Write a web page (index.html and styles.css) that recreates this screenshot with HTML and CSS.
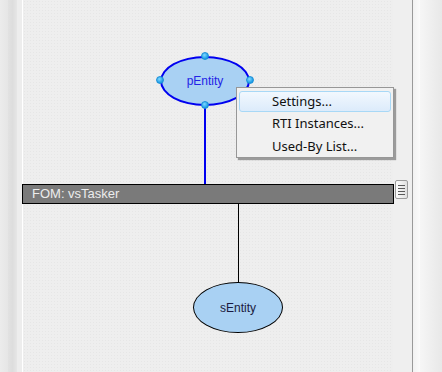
FILE: index.html
```html
<!DOCTYPE html>
<html>
<head>
<meta charset="utf-8">
<link rel="stylesheet" href="styles.css">
</head>
<body>
<div class="frame">
  <div class="left-panel"><div class="lp-a"></div><div class="lp-b"></div><div class="lp-c"></div></div>
  <div class="canvas">
    <div class="link link-blue"></div>
    <div class="link link-black"></div>
    <div class="node node-p">pEntity</div>
    <span class="handle h-top"></span>
    <span class="handle h-left"></span>
    <span class="handle h-right"></span>
    <span class="handle h-bottom"></span>
    <div class="fom-bar">FOM: vsTasker</div>
    <div class="node node-s">sEntity</div>
    <div class="menu">
      <div class="menu-item active">Settings...</div>
      <div class="menu-item">RTI Instances...</div>
      <div class="menu-item">Used-By List...</div>
    </div>
  </div>
  <div class="right-panel">
    <div class="rp-a"><div class="grip"><i></i><i></i><i></i><i></i></div></div>
    <div class="rp-line"></div>
    <div class="rp-b"></div>
    <div class="rp-c"></div>
  </div>
</div>
</body>
</html>
```
FILE: styles.css
```css
* { box-sizing: border-box; }
html, body { margin: 0; padding: 0; }
body { width: 442px; height: 372px; overflow: hidden; background: #ededed; font-family: "Liberation Sans", Arial, sans-serif; }
.frame { display: flex; width: 442px; height: 372px; }
.left-panel { display: flex; width: 22px; flex: none; }
.lp-a { width: 8px; background: linear-gradient(to right, #ececec, #e6e6e6); }
.lp-b { width: 9px; background: linear-gradient(to right, #e2e2e2, #dddddd 50%, #e6e6e6); }
.lp-c { width: 5px; background: #ededed; }
.canvas { position: relative; z-index: 1; width: 371px; flex: none; background-color: #eeeeee; border-left: 1px solid #ffffff;
  background-image: radial-gradient(circle, #e6e6e6 0.6px, transparent 0.9px); background-size: 3px 3px; }
.right-panel { display: flex; flex: 1; }
.rp-a { position: relative; width: 19px; background: #efefef; }
.rp-line { width: 1px; background: #9a9a9a; }
.rp-b { width: 7px; background: linear-gradient(to right, #f2f2f2, #fbfbfb); }
.rp-c { flex: 1; background: linear-gradient(to right, #f6f6f6, #ececec 70%, #e8e8e8); }
.grip { position: absolute; left: 2px; top: 180px; width: 13px; height: 19px; border: 1px solid #9c9c9c; border-radius: 2px;
  background: linear-gradient(to right, #fdfdfd, #e0e0e0); display: flex; flex-direction: column; justify-content: center; gap: 2px; padding: 0 2px; }
.grip i { display: block; height: 1px; background: #5a5a5a; }

.node { position: absolute; border-radius: 50%; background: #a9d1f3; display: flex; align-items: center; justify-content: center; font-size: 12px; }
.node-p { left: 137px; top: 56px; width: 90px; height: 50px; border: 2px solid #0000f0; color: #2323e6; }
.node-s { left: 170px; top: 282px; width: 90px; height: 51px; border: 1px solid #000; color: #1a1a40; }
.handle { position: absolute; width: 8px; height: 8px; border-radius: 50%; background: radial-gradient(circle at 40% 35%, #7fd8ff, #1b9be6 70%); border: 1px solid #1a8fd8; }
.h-top { left: 178px; top: 52px; }
.h-left { left: 133px; top: 76px; }
.h-right { left: 223px; top: 76px; }
.h-bottom { left: 178px; top: 101px; }
.link { position: absolute; }
.link-blue { left: 181px; top: 105px; width: 2px; height: 80px; background: #0000f0; }
.link-black { left: 215px; top: 203px; width: 1px; height: 80px; background: #000; }
.fom-bar { position: absolute; left: -1px; top: 184px; width: 372px; height: 20px; border: 1px solid #000; background: #7a7a7a;
  color: #ececec; font-size: 13px; line-height: 18px; padding-left: 9px; }
.menu { position: absolute; left: 213px; top: 87px; width: 158px; height: 71px; background: #f1f1f1; border: 1px solid #979797;
  padding: 3px 2px; box-shadow: 2px 2px 1px rgba(0,0,0,0.35); font-family: "Noto Sans", "Open Sans", sans-serif; font-size: 13px; color: #101010; }
.menu-item { height: 23px; line-height: 21px; padding-left: 32px; border: 1px solid transparent; border-radius: 3px; }
.menu-item.active { border-color: #a8d8f6; background: linear-gradient(to bottom, #f2f8fe, #dcebfb); height: 21px; line-height: 19px; }
```
